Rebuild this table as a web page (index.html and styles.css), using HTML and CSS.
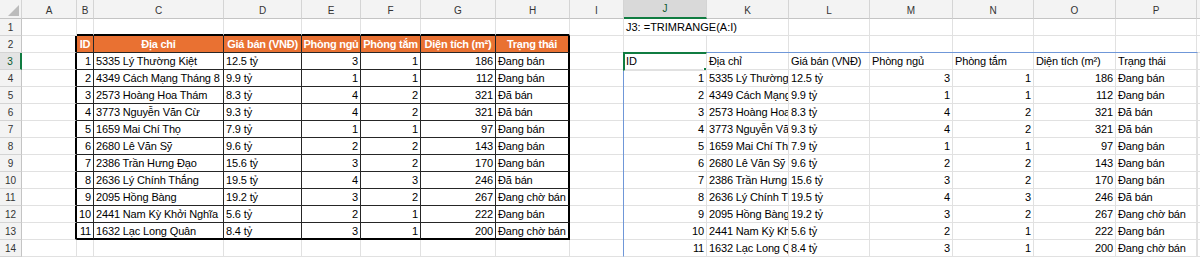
FILE: index.html
```html
<!DOCTYPE html>
<html lang="vi">
<head>
<meta charset="utf-8">
<title>TRIMRANGE</title>
<link rel="stylesheet" href="styles.css">
</head>
<body>
<div class="sheet">
  <!-- column headers -->
  <div class="corner"><svg width="22" height="19" viewBox="0 0 22 19"><polygon points="19,5 19,16 8,16" fill="#bcbcbc"/></svg></div>
  <div class="ch">A</div><div class="ch">B</div><div class="ch">C</div><div class="ch">D</div><div class="ch">E</div><div class="ch">F</div><div class="ch">G</div><div class="ch">H</div><div class="ch">I</div><div class="ch sel">J</div><div class="ch">K</div><div class="ch">L</div><div class="ch">M</div><div class="ch">N</div><div class="ch">O</div><div class="ch">P</div><div class="ch q"></div>

  <!-- row 1 -->
  <div class="rh">1</div><div></div>
  <div class="tt"></div><div class="tt"></div><div class="tt"></div><div class="tt"></div><div class="tt"></div><div class="tt"></div><div class="tt"></div>
  <div></div><div class="span2">J3: =TRIMRANGE(A:I)</div><div></div><div></div><div></div><div></div><div></div><div class="q"></div>

  <!-- row 2 -->
  <div class="rh">2</div><div class="tl"></div>
  <div class="t th">ID</div><div class="t th">Địa chỉ</div><div class="t th">Giá bán (VNĐ)</div><div class="t th">Phòng ngủ</div><div class="t th">Phòng tắm</div><div class="t th">Diện tích (m²)</div><div class="t th tr">Trạng thái</div>
  <div></div><div></div><div></div><div></div><div></div><div></div><div></div><div></div><div class="q"></div>

  <!-- row 3 -->
  <div class="rh rsel">3</div><div class="tl"></div>
  <div class="t n">1</div><div class="t">5335 Lý Thường Kiệt</div><div class="t">12.5 tỷ</div><div class="t n">3</div><div class="t n">1</div><div class="t n">186</div><div class="t tr">Đang bán</div>
  <div></div><div>ID</div><div>Địa chỉ</div><div>Giá bán (VNĐ)</div><div>Phòng ngủ</div><div>Phòng tắm</div><div>Diện tích (m²)</div><div>Trạng thái</div><div class="q"></div>

  <!-- row 4 -->
  <div class="rh">4</div><div class="tl"></div>
  <div class="t n">2</div><div class="t">4349 Cách Mạng Tháng 8</div><div class="t">9.9 tỷ</div><div class="t n">1</div><div class="t n">1</div><div class="t n">112</div><div class="t tr">Đang bán</div>
  <div></div><div class="n">1</div><div>5335 Lý Thường Kiệt</div><div>12.5 tỷ</div><div class="n">3</div><div class="n">1</div><div class="n">186</div><div>Đang bán</div><div class="q"></div>

  <!-- row 5 -->
  <div class="rh">5</div><div class="tl"></div>
  <div class="t n">3</div><div class="t">2573 Hoàng Hoa Thám</div><div class="t">8.3 tỷ</div><div class="t n">4</div><div class="t n">2</div><div class="t n">321</div><div class="t tr">Đã bán</div>
  <div></div><div class="n">2</div><div>4349 Cách Mạng Tháng 8</div><div>9.9 tỷ</div><div class="n">1</div><div class="n">1</div><div class="n">112</div><div>Đang bán</div><div class="q"></div>

  <!-- row 6 -->
  <div class="rh">6</div><div class="tl"></div>
  <div class="t n">4</div><div class="t">3773 Nguyễn Văn Cừ</div><div class="t">9.3 tỷ</div><div class="t n">4</div><div class="t n">2</div><div class="t n">321</div><div class="t tr">Đã bán</div>
  <div></div><div class="n">3</div><div>2573 Hoàng Hoa Thám</div><div>8.3 tỷ</div><div class="n">4</div><div class="n">2</div><div class="n">321</div><div>Đã bán</div><div class="q"></div>

  <!-- row 7 -->
  <div class="rh">7</div><div class="tl"></div>
  <div class="t n">5</div><div class="t">1659 Mai Chí Thọ</div><div class="t">7.9 tỷ</div><div class="t n">1</div><div class="t n">1</div><div class="t n">97</div><div class="t tr">Đang bán</div>
  <div></div><div class="n">4</div><div>3773 Nguyễn Văn Cừ</div><div>9.3 tỷ</div><div class="n">4</div><div class="n">2</div><div class="n">321</div><div>Đã bán</div><div class="q"></div>

  <!-- row 8 -->
  <div class="rh">8</div><div class="tl"></div>
  <div class="t n">6</div><div class="t">2680 Lê Văn Sỹ</div><div class="t">9.6 tỷ</div><div class="t n">2</div><div class="t n">2</div><div class="t n">143</div><div class="t tr">Đang bán</div>
  <div></div><div class="n">5</div><div>1659 Mai Chí Thọ</div><div>7.9 tỷ</div><div class="n">1</div><div class="n">1</div><div class="n">97</div><div>Đang bán</div><div class="q"></div>

  <!-- row 9 -->
  <div class="rh">9</div><div class="tl"></div>
  <div class="t n">7</div><div class="t">2386 Trần Hưng Đạo</div><div class="t">15.6 tỷ</div><div class="t n">3</div><div class="t n">2</div><div class="t n">170</div><div class="t tr">Đang bán</div>
  <div></div><div class="n">6</div><div>2680 Lê Văn Sỹ</div><div>9.6 tỷ</div><div class="n">2</div><div class="n">2</div><div class="n">143</div><div>Đang bán</div><div class="q"></div>

  <!-- row 10 -->
  <div class="rh">10</div><div class="tl"></div>
  <div class="t n">8</div><div class="t">2636 Lý Chính Thắng</div><div class="t">19.5 tỷ</div><div class="t n">4</div><div class="t n">3</div><div class="t n">246</div><div class="t tr">Đã bán</div>
  <div></div><div class="n">7</div><div>2386 Trần Hưng Đạo</div><div>15.6 tỷ</div><div class="n">3</div><div class="n">2</div><div class="n">170</div><div>Đang bán</div><div class="q"></div>

  <!-- row 11 -->
  <div class="rh">11</div><div class="tl"></div>
  <div class="t n">9</div><div class="t">2095 Hồng Bàng</div><div class="t">19.2 tỷ</div><div class="t n">3</div><div class="t n">2</div><div class="t n">267</div><div class="t tr">Đang chờ bán</div>
  <div></div><div class="n">8</div><div>2636 Lý Chính Thắng</div><div>19.5 tỷ</div><div class="n">4</div><div class="n">3</div><div class="n">246</div><div>Đã bán</div><div class="q"></div>

  <!-- row 12 -->
  <div class="rh">12</div><div class="tl"></div>
  <div class="t n">10</div><div class="t">2441 Nam Kỳ Khởi Nghĩa</div><div class="t">5.6 tỷ</div><div class="t n">2</div><div class="t n">1</div><div class="t n">222</div><div class="t tr">Đang bán</div>
  <div></div><div class="n">9</div><div>2095 Hồng Bàng</div><div>19.2 tỷ</div><div class="n">3</div><div class="n">2</div><div class="n">267</div><div>Đang chờ bán</div><div class="q"></div>

  <!-- row 13 -->
  <div class="rh">13</div><div class="tl"></div>
  <div class="t tb n">11</div><div class="t tb">1632 Lạc Long Quân</div><div class="t tb">8.4 tỷ</div><div class="t tb n">3</div><div class="t tb n">1</div><div class="t tb n">200</div><div class="t tb tr">Đang chờ bán</div>
  <div></div><div class="n">10</div><div>2441 Nam Kỳ Khởi Nghĩa</div><div>5.6 tỷ</div><div class="n">2</div><div class="n">1</div><div class="n">222</div><div>Đang bán</div><div class="q"></div>

  <!-- row 14 -->
  <div class="rh">14</div><div></div>
  <div></div><div></div><div></div><div></div><div></div><div></div><div></div>
  <div></div><div class="n">11</div><div>1632 Lạc Long Quân</div><div>8.4 tỷ</div><div class="n">3</div><div class="n">1</div><div class="n">200</div><div>Đang chờ bán</div><div class="q"></div>

  <div class="spill"></div>
  <div class="selection"><span class="handle"></span></div>
</div>
</body>
</html>
```

FILE: styles.css
```css
html, body {
  margin: 0;
  padding: 0;
  background: #ffffff;
}

body {
  width: 1200px;
  height: 258px;
  overflow: hidden;
  font-family: "Liberation Sans", Arial, sans-serif;
  font-size: 11px;
  color: #000000;
}

.sheet {
  position: relative;
  display: grid;
  grid-template-columns: 22px 55px 17px 130px 78px 59px 60px 75px 74px 54px 83px 82px 81px 83px 81px 82px 81px 3px;
  grid-template-rows: 19px;
  grid-auto-rows: 17px;
  width: 1200px;
  height: 258px;
  overflow: hidden;
}

.sheet > div {
  box-sizing: border-box;
  border-right: 1px solid #e1e1e1;
  border-bottom: 1px solid #e1e1e1;
  overflow: hidden;
  white-space: nowrap;
  line-height: 16px;
  padding: 0 2px;
  letter-spacing: -0.15px;
}

.sheet > .q {
  padding: 0;
  border-right: 0;
}

.sheet > .span2 {
  grid-column: span 2;
  letter-spacing: 0;
}

.sheet > .corner {
  padding: 0;
  background: #f3f3f3;
  border-right-color: #d4d4d4;
  border-bottom-color: #c4c4c4;
}

.corner svg {
  display: block;
}

.sheet > .ch {
  background: #f3f3f3;
  border-right-color: #d4d4d4;
  border-bottom-color: #c4c4c4;
  text-align: center;
  font-size: 10px;
  line-height: 19px;
  padding-top: 1px;
  color: #333333;
  letter-spacing: 0;
}

.sheet > .ch.sel {
  background: #d9d9d9;
  border-bottom: 2px solid #107c41;
  color: #0b5a2f;
  padding-top: 0;
  line-height: 18px;
}

.sheet > .rh {
  background: #f3f3f3;
  border-right-color: #c4c4c4;
  border-bottom-color: #d4d4d4;
  text-align: center;
  font-size: 10px;
  line-height: 17px;
  padding: 0;
  color: #333333;
  letter-spacing: 0;
}

.sheet > .rh.rsel {
  background: #e4e4e4;
  border-right: 2px solid #107c41;
  color: #0b5a2f;
}

.sheet > .tt {
  border-bottom: 2px solid #000000;
}

.sheet > .tl {
  border-right: 2px solid #000000;
}

.sheet > .t {
  border-right: 1px solid #262626;
  border-bottom: 1px solid #262626;
}

.sheet > .tr {
  border-right: 2px solid #000000;
}

.sheet > .tb {
  border-bottom: 2px solid #000000;
}

.sheet > .th {
  background: #e97132;
  color: #ffffff;
  font-weight: bold;
  text-align: center;
  padding: 0;
  letter-spacing: -0.25px;
}

.sheet > .n {
  text-align: right;
}

.spill {
  position: absolute;
  left: 623px;
  top: 52px;
  width: 575px;
  height: 205px;
  box-sizing: border-box;
  border: 1px solid #6f97d8;
  pointer-events: none;
}

.selection {
  position: absolute;
  left: 623px;
  top: 52px;
  width: 84px;
  height: 19px;
  box-sizing: border-box;
  border: 2px solid #107c41;
  pointer-events: none;
}

.handle {
  position: absolute;
  right: -4px;
  bottom: -4px;
  width: 5px;
  height: 5px;
  background: #107c41;
  border: 1px solid #ffffff;
}
```
